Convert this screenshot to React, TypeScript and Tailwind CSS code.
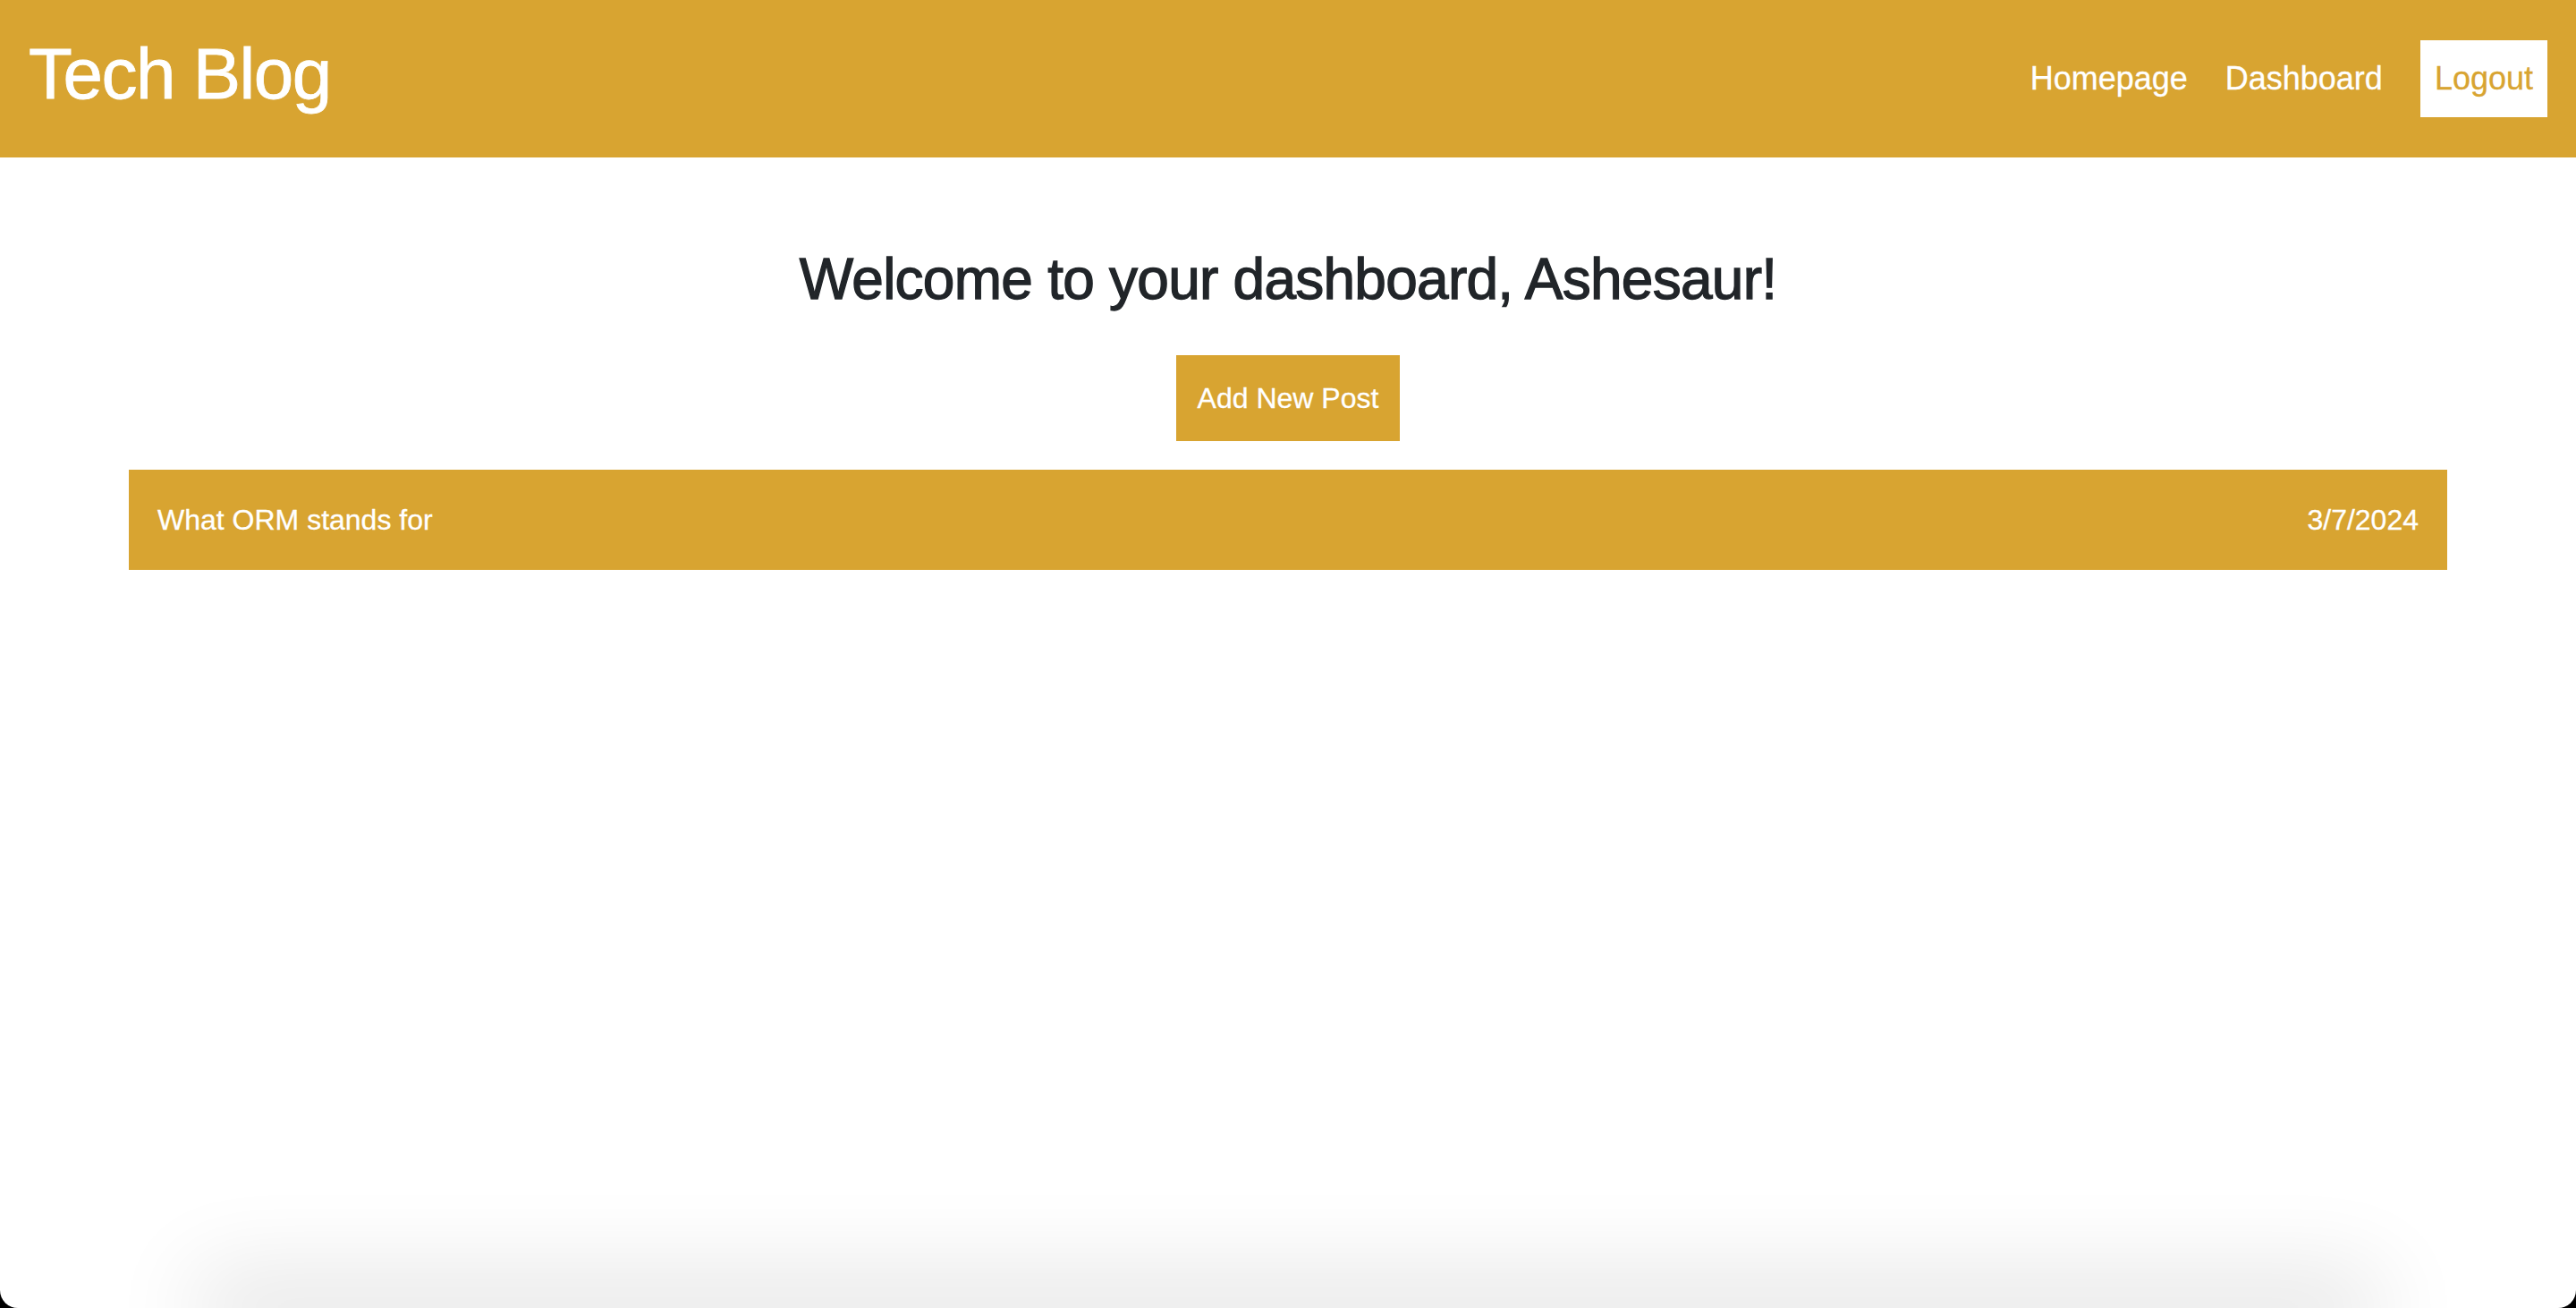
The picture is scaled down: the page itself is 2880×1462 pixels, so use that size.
import React from 'react';

const GOLD = 'bg-[#d8a431]';

interface Post {
  id: number;
  title: string;
  date: string;
}

const posts: Post[] = [{ id: 1, title: 'What ORM stands for', date: '3/7/2024' }];

const Header: React.FC = () => (
  <header className={`flex h-[176px] shrink-0 items-center justify-between ${GOLD} pl-[32px] pr-[32px]`}>
    <a className="pb-[11px] text-[80px] leading-none tracking-[-1.5px] text-white [-webkit-text-stroke:0.8px_#ffffff]">
      Tech Blog
    </a>
    <nav className="flex items-center gap-[42px] text-[36px] leading-[1.5] text-white [-webkit-text-stroke:0.3px_#ffffff]">
      <a>Homepage</a>
      <a>Dashboard</a>
      <button className="bg-white px-[16px] py-[16px] leading-[1.5] text-[#d8a431] [-webkit-text-stroke:0.3px_#d8a431]">
        Logout
      </button>
    </nav>
  </header>
);

export default function App() {
  return (
    <div className="min-h-screen bg-black">
      <div className="flex h-[1462px] flex-col overflow-hidden rounded-b-[20px] bg-white font-['Liberation_Sans',Arial,sans-serif]">
        <Header />

        <main className="mx-auto w-[2640px] px-[24px]">
          <h2 className="mt-[98px] text-center text-[64px] leading-[1.2] tracking-[-0.75px] text-[#212529] [-webkit-text-stroke:1.3px_#212529]">
            Welcome to your dashboard, Ashesaur!
          </h2>
          <div className="mt-[46px] flex justify-center">
            <button className={`${GOLD} px-[24px] py-[24px] text-[32px] leading-[1.5] text-white [-webkit-text-stroke:0.3px_#ffffff]`}>
              Add New Post
            </button>
          </div>
          <div className="mt-[32px] flex flex-col">
            {posts.map((post) => (
              <div
                key={post.id}
                className={`flex items-center justify-between ${GOLD} p-[32px] text-[32px] leading-[1.5] text-white [-webkit-text-stroke:0.3px_#ffffff]`}
              >
                <span>{post.title}</span>
                <span>{post.date}</span>
              </div>
            ))}
          </div>
        </main>

        {/* shadow cast from below the window edge */}
        <div className="mx-[260px] mt-auto h-0 shrink-0 shadow-[0_0_100px_40px_rgba(0,0,0,0.11)]"></div>
      </div>
    </div>
  );
}
